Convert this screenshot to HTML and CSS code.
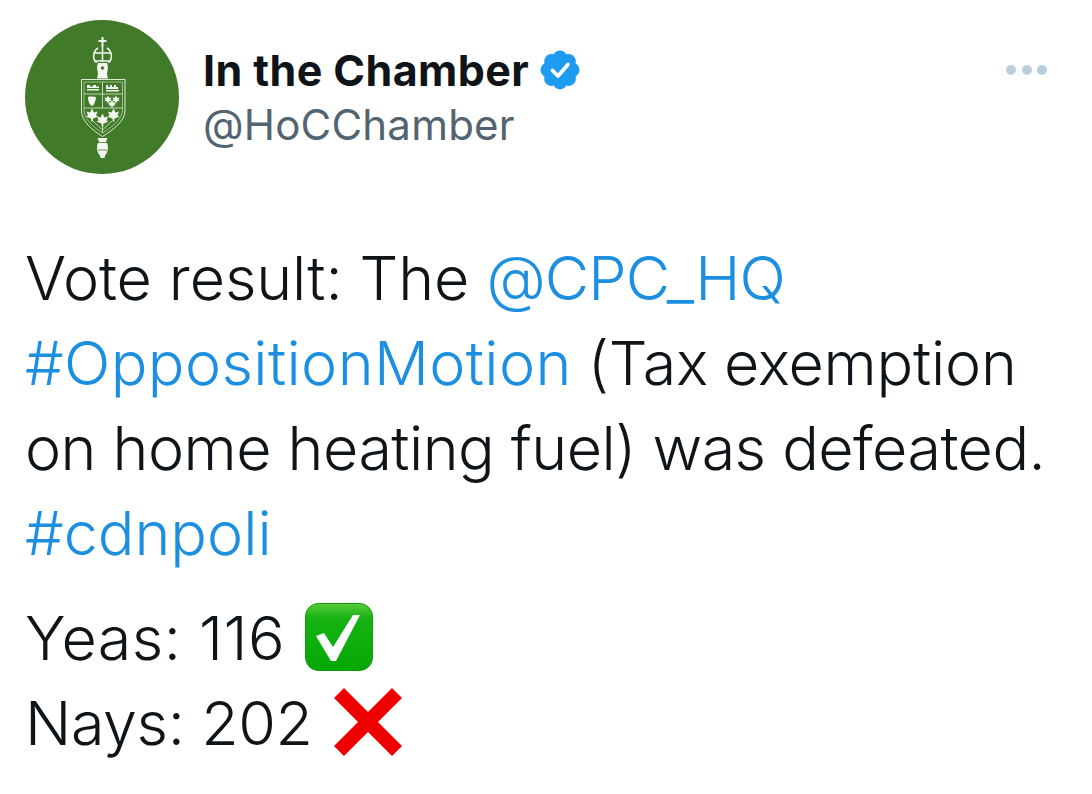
FILE: index.html
```html
<!DOCTYPE html>
<html lang="en">
<head>
<meta charset="utf-8">
<title>In the Chamber</title>
<link rel="stylesheet" href="styles.css">
</head>
<body>
<article class="tweet">
  <header class="head">
    <svg class="avatar" viewBox="0 0 154 154" aria-hidden="true">
      <defs>
        <path id="leaf" d="M0-6.500L2-2.500 5.500-3.500 4 .5 6 1.500 .8 3.800V6.500H-.8V3.800L-6 1.500-4 .5-5.500-3.500-2-2.500Z"/>
      </defs>
      <circle cx="77" cy="77" r="77" fill="#417a28"/>
      <g class="emblem">
        <g fill="none" stroke="#dfe9d8" stroke-width="1">
          <path d="M56.500 59.500H100V91C100 101 88 110 77.500 116.500C67 110 56.500 101 56.500 91Z"/>
          <path d="M59 62H97.500V90C97.500 99 87 107 77.500 113C68 107 59 99 59 90Z" stroke-width=".6"/>
          <path d="M59 74H97.500M59 88H97.500M77.500 62V88" stroke-width=".8"/>
          <path d="M77.500 105V113M68 101l9.500 9M87 101l-9.500 9" stroke-width=".8"/>
          <path d="M73 28c-4 2-5 7-4 11 .5 2 2 3 3 3M82 28c4 2 5 7 4 11-.5 2-2 3-3 3M77.500 27v15M69 33h17M70 41h15" stroke-width="1.600" stroke="#f4f7f0"/>
        </g>
        <g fill="#f4f7f0">
          <path d="M76.500 17h2v3h3v2h-3v5h-2v-5h-3v-2h3z"/>
          <path d="M73 43h9l1 4-1 7 1 4.500H72l1-4.500-1-7z"/>
          <path d="M62 65h3v1.500h3V65h3v1.500h3v1.500H62zM62 69h12v1.500H62zM81 65h2v2h2v-2h2v2h2v-2h2v2h2v2H81zM81 70h13v1.500H81z"/>
          <path d="M63 77c3-1 6 0 8 0-.5 5-2 8-4 9-2-1-4-4-4-9z"/>
          <path d="M72.500 118h10l-1.500 3.500 1.500 2.500c1 4.500 0 9.500-2.500 11.500l-.5 2.500h-4l-.5-2.500c-2.500-2-3.500-7-2.500-11.500l1.500-2.500z"/>
          <use href="#leaf" transform="translate(83 79.500) scale(.62)"/>
          <use href="#leaf" transform="translate(91 79.500) scale(.62)"/>
          <use href="#leaf" transform="translate(87 84) scale(.62)"/>
          <use href="#leaf" transform="translate(67 95)"/>
          <use href="#leaf" transform="translate(88.500 95)"/>
          <use href="#leaf" transform="translate(77.500 100)"/>
        </g>
        <g fill="none" stroke="#417a28">
          <circle cx="77.500" cy="48" r="1.800" fill="#417a28" stroke="none"/>
          <path d="M73 122.500h9M73 130h9" stroke-width=".8"/>
        </g>
      </g>
    </svg>
    <div class="who">
      <div class="name-row">
        <span class="name">In the Chamber</span>
        <svg class="badge" viewBox="0 0 40 40" aria-hidden="true">
          <path fill="#1d9bf0" d="M20 .5c2.800 0 5.200 1.600 6.400 3.900 2.500-.8 5.300-.2 7.300 1.800s2.600 4.800 1.800 7.400c2.300 1.200 4 3.600 4 6.400s-1.700 5.200-4 6.400c.8 2.600.2 5.400-1.800 7.400s-4.800 2.600-7.300 1.800c-1.200 2.300-3.600 3.900-6.400 3.900s-5.200-1.600-6.400-3.900c-2.500.8-5.300.2-7.300-1.800s-2.600-4.800-1.800-7.400C2.200 25.200.500 22.800.500 20s1.700-5.200 4-6.400c-.8-2.600-.2-5.400 1.800-7.400s4.800-2.600 7.300-1.800C14.800 2.100 17.200.5 20 .5z"/>
          <path fill="none" stroke="#fff" stroke-width="3.800" stroke-linecap="round" stroke-linejoin="round" d="M12.500 20.500l5.500 5.500 10-11.500"/>
        </svg>
      </div>
      <div class="handle">@HoCChamber</div>
    </div>
    <div class="more" aria-hidden="true"><i></i><i></i><i></i></div>
  </header>
  <p class="body"><span class="t-1">Vote result: The </span><span class="link t-6">@CPC_HQ</span><br><span class="link t-wide">#OppositionMotion</span><span class="t-2"> (Tax exemption</span><br><span class="t-5">on home heating fuel) was defeated.</span><br><span class="link">#cdnpoli</span></p>
  <p class="body votes">
    <span class="t-wide2">Yeas: 116</span>
    <svg class="emoji emoji-check" viewBox="0 0 70 70" aria-hidden="true">
      <defs><linearGradient id="g" x1="0" y1="0" x2="0" y2="1"><stop offset="0" stop-color="#5ccb3c"/><stop offset=".22" stop-color="#16b312"/><stop offset="1" stop-color="#05a805"/></linearGradient></defs>
      <rect x="1.500" y="1.500" width="67" height="67" rx="13" fill="url(#g)" stroke="#0e9a0e" stroke-width="1"/>
      <path fill="#fff" d="M12 34l8-3 9 14L49 13h7L32 59h-5z"/>
    </svg><br>
    <span class="t-3">Nays: 202</span>
    <svg class="emoji emoji-cross" viewBox="0 0 70 70" aria-hidden="true">
      <path fill="#ee0000" d="M11 1l24 24L59 1l10 10-24 24 24 24-10 10-24-24-24 24L1 59l24-24L1 11z"/>
    </svg>
  </p>
</article>
</body>
</html>
```
FILE: styles.css
```css
html, body {
  margin: 0;
  background: #fff;
}
.tweet {
  width: 1092px;
  height: 794px;
  padding: 20px 0 0 25px;
  box-sizing: border-box;
  overflow: hidden;
  font-family: Inter, "Liberation Sans", sans-serif;
  color: #0f1419;
}
.head {
  display: flex;
  align-items: flex-start;
}
.avatar {
  width: 154px;
  height: 154px;
  flex: none;
}
.emblem {
  filter: blur(.35px);
}
.who {
  margin-left: 24px;
  padding-top: 23px;
}
.name-row {
  display: flex;
  align-items: center;
  height: 54px;
}
.name {
  font-size: 43px;
  font-weight: 700;
  letter-spacing: .4px;
}
.badge {
  width: 40px;
  height: 40px;
  margin-left: 11px;
}
.handle {
  font-size: 42px;
  line-height: 56px;
  color: #536471;
  letter-spacing: .2px;
}
.more {
  display: flex;
  gap: 5.500px;
  margin-left: auto;
  margin-right: 45px;
  padding-top: 45px;
}
.more i {
  width: 10px;
  height: 10px;
  border-radius: 50%;
  background: #b9cedd;
}
.body {
  margin: 62px 0 0;
  font-size: 61px;
  font-weight: 300;
  line-height: 85px;
  white-space: nowrap;
}
.votes {
  margin-top: 20px;
}
.link {
  color: #1d8fe0;
}
.t-1 { letter-spacing: -.1px; }
.t-2 { letter-spacing: -.25px; word-spacing: -1px; }
.t-3 { letter-spacing: -.4px; }
.t-5 { letter-spacing: -.55px; }
.t-6 { letter-spacing: -.9px; }
.t-wide { letter-spacing: .38px; }
.t-wide2 { letter-spacing: .45px; }
.emoji {
  width: 70px;
  height: 70px;
  vertical-align: -12px;
}
.emoji-check {
  margin-left: 2px;
}
.emoji-cross {
  margin-left: 3px;
}
```
